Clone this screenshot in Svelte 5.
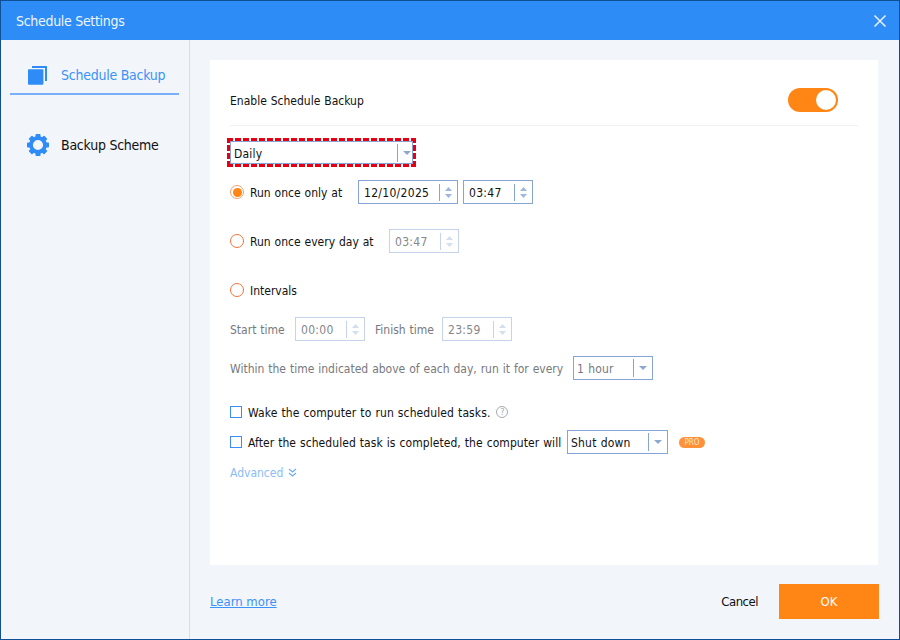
<script lang="ts">
	let enabled = $state(true);
	let mode = $state('once');
	let wake = $state(false);
	let after = $state(false);

	const gearTeeth = [0, 45, 90, 135, 180, 225, 270, 315];
</script>

{#snippet spin(value: string, width: number, disabled = false)}
	<div class="spin" class:disabled style="width: {width}px">
		<span class="spin-value">{value}</span>
		<span class="spin-arrows">
			<svg width="7" height="4" viewBox="0 0 7 4"><path d="M3.5 0 7 4H0Z" /></svg>
			<svg width="7" height="4" viewBox="0 0 7 4"><path d="M0 0H7L3.5 4Z" /></svg>
		</span>
	</div>
{/snippet}

{#snippet combo(value: string, width: number, cls = '')}
	<div class="combo {cls}" style="width: {width}px">
		<span class="combo-value">{value}</span>
		<span class="combo-arrow">
			<svg width="8" height="4" viewBox="0 0 8 4"><path d="M0 0H8L4 4Z" /></svg>
		</span>
	</div>
{/snippet}

{#snippet radio(id: string)}
	<button class="radio" class:on={mode === id} aria-label={id} onclick={() => (mode = id)}></button>
{/snippet}

<div class="window">
	<header class="titlebar">
		<span>Schedule Settings</span>
		<svg class="close" width="14" height="14" viewBox="0 0 14 14">
			<path d="M1.500 1.500 12.500 12.500M12.500 1.500 1.500 12.500" />
		</svg>
	</header>

	<div class="body">
		<nav class="sidebar">
			<div class="tab active">
				<svg class="tab-icon" width="24" height="24" viewBox="0 0 24 24">
					<path d="M5 3H20V18H18V5H5Z" fill="#2f8cf7" />
					<rect x="1" y="6.300" width="15.400" height="15.400" rx="1" fill="#2f8cf7" />
				</svg>
				<span>Schedule Backup</span>
			</div>
			<div class="tab">
				<svg class="tab-icon" width="24" height="24" viewBox="0 0 24 24">
					<circle cx="11" cy="12" r="7" fill="none" stroke="#2f8cf7" stroke-width="3.800" />
					{#each gearTeeth as angle}
						<rect x="8.500" y="1" width="5" height="4.500" rx="0.800" fill="#2f8cf7" transform="rotate({angle} 11 12)" />
					{/each}
				</svg>
				<span>Backup Scheme</span>
			</div>
		</nav>

		<main class="content">
			<section class="card">
				<div class="card-head">
					<span class="text">Enable Schedule Backup</span>
					<button class="toggle" class:on={enabled} aria-label="Enable" onclick={() => (enabled = !enabled)}></button>
				</div>

				<div class="highlight">
					{@render combo('Daily', 183, 'tall')}
				</div>

				<div class="row first">
					{@render radio('once')}
					<span class="text label once-label">Run once only at</span>
					{@render spin('12/10/2025', 100)}
					{@render spin('03:47', 70)}
				</div>

				<div class="row gap-lg">
					{@render radio('daily')}
					<span class="text label daily-label">Run once every day at</span>
					{@render spin('03:47', 70, true)}
				</div>

				<div class="row gap-lg">
					{@render radio('interval')}
					<span class="text label">Intervals</span>
				</div>

				<div class="row gap-sm muted">
					<span class="text start-label">Start time</span>
					{@render spin('00:00', 70, true)}
					<span class="text finish-label">Finish time</span>
					{@render spin('23:59', 70, true)}
				</div>

				<div class="row gap-sm muted">
					<span class="text within-label">Within the time indicated above of each day, run it for every</span>
					{@render combo('1 hour', 80, 'dim')}
				</div>

				<div class="row wake-row">
					<button class="check" class:on={wake} aria-label="Wake" onclick={() => (wake = !wake)}></button>
					<span class="text check-label">Wake the computer to run scheduled tasks.</span>
					<span class="help">?</span>
				</div>

				<div class="row">
					<button class="check" class:on={after} aria-label="After" onclick={() => (after = !after)}></button>
					<span class="text check-label after-label">After the scheduled task is completed, the computer will</span>
					{@render combo('Shut down', 101)}
					<span class="pro">PRO</span>
				</div>

				<div class="row advanced">
					<span class="text">Advanced</span>
					<svg width="9" height="9" viewBox="0 0 9 9">
						<path d="M1 1 4.500 4 8 1M1 5 4.500 8 8 5" />
					</svg>
				</div>
			</section>

			<footer class="footer">
				<a href="#learn" class="learn">Learn more</a>
				<span class="cancel">Cancel</span>
				<button class="ok">OK</button>
			</footer>
		</main>
	</div>
</div>

<style>
	:global(body) {
		margin: 0;
	}

	.window {
		width: 900px;
		height: 640px;
		box-sizing: border-box;
		display: flex;
		flex-direction: column;
		border: 1px solid #114f94;
		border-top: 0;
		background: #f2f5fa;
		font-family: "DejaVu Sans Condensed", "DejaVu Sans", sans-serif;
		font-size: 12px;
		color: #111;
		overflow: hidden;
	}

	.titlebar {
		height: 40px;
		flex: none;
		display: flex;
		align-items: center;
		justify-content: space-between;
		padding: 0 12px 0 15px;
		background: #2e8cf7;
		border-top: 1px solid #114f94;
		box-sizing: border-box;
		color: #eef5ff;
		font-size: 14px;
		letter-spacing: -0.3px;
	}

	.close path {
		stroke: #e4effd;
		stroke-width: 1.6;
		fill: none;
	}

	.body {
		flex: 1;
		display: flex;
		min-height: 0;
	}

	.sidebar {
		width: 169px;
		flex: none;
		border-right: 1px solid #d8dee6;
		padding: 12px 10px 0 9px;
	}

	.tab {
		height: 46px;
		display: flex;
		align-items: center;
		gap: 10px;
		padding: 5px 0 0 17px;
		font-size: 14px;
		letter-spacing: -0.25px;
		color: #111;
		margin-bottom: 24px;
		box-sizing: border-box;
	}

	.tab.active {
		color: #3b92f8;
		border-bottom: 2px solid #7ab0fb;
		height: 43px;
	}

	.tab-icon {
		flex: none;
	}

	.content {
		flex: 1;
		display: flex;
		flex-direction: column;
		padding: 20px 21px 0 20px;
		min-width: 0;
	}

	.card {
		height: 505px;
		flex: none;
		background: #fff;
		padding: 0 20px;
		box-sizing: border-box;
		word-spacing: 0.5px;
	}

	.card-head {
		height: 66px;
		display: flex;
		align-items: center;
		justify-content: space-between;
		padding: 15px 20px 0 0;
		border-bottom: 1px solid #f0f1f3;
		box-sizing: border-box;
	}

	.text {
		padding-top: 2px;
	}

	.toggle {
		width: 50px;
		height: 24px;
		padding: 0;
		border: 0;
		border-radius: 12px;
		background: #c9cfd8;
		position: relative;
		cursor: pointer;
	}

	.toggle.on {
		background: #ff8514;
	}

	.toggle::after {
		content: '';
		position: absolute;
		top: 2px;
		left: 2px;
		width: 20px;
		height: 20px;
		border-radius: 50%;
		background: #fff;
	}

	.toggle.on::after {
		left: 28px;
	}

	.highlight {
		width: 183px;
		margin: 12px 0 0 -3px;
		padding: 3px;
		background:
			repeating-linear-gradient(90deg, #e60012 0 6px, transparent 6px 8px) top / 100% 3px no-repeat,
			repeating-linear-gradient(90deg, #e60012 0 6px, transparent 6px 8px) bottom / 100% 3px no-repeat,
			repeating-linear-gradient(0deg, #e60012 0 6px, transparent 6px 8px) left / 3px 100% no-repeat,
			repeating-linear-gradient(0deg, #e60012 0 6px, transparent 6px 8px) right / 3px 100% no-repeat;
	}

	.row {
		height: 30px;
		display: flex;
		align-items: center;
	}

	.row.first {
		margin-top: 10px;
	}

	.gap-lg {
		margin-top: 19px;
	}

	.gap-sm {
		margin-top: 9px;
	}

	.wake-row {
		margin-top: 14px;
	}

	.muted {
		color: #77797d;
	}

	.radio {
		width: 12px;
		height: 12px;
		flex: none;
		padding: 0;
		border: 1px solid #f0733a;
		border-radius: 50%;
		background: #fff;
		position: relative;
		cursor: pointer;
		box-sizing: content-box;
	}

	.radio.on {
		border-color: #f0a070;
	}

	.radio.on::after {
		content: '';
		position: absolute;
		inset: 1.5px;
		border-radius: 50%;
		background: #ff8514;
	}

	.label {
		margin-left: 6px;
	}

	.once-label {
		width: 108px;
	}

	.daily-label {
		width: 139px;
	}

	.spin {
		height: 24px;
		box-sizing: border-box;
		display: flex;
		align-items: center;
		border: 1px solid #86a5d6;
		margin-right: 5px;
		background: #fff;
		color: #111;
		flex: none;
	}

	.spin.disabled {
		border-color: #c5d4ec;
		color: #85878b;
	}

	.spin-value {
		flex: 1;
		padding: 2px 0 0 5px;
		letter-spacing: 0.3px;
	}

	.spin-arrows {
		width: 17px;
		height: 17px;
		border-left: 1px solid #86a5d6;
		display: flex;
		flex-direction: column;
		align-items: center;
		justify-content: center;
		gap: 3px;
		flex: none;
	}

	.spin-arrows path {
		fill: #9fb7dd;
	}

	.disabled .spin-arrows {
		border-left-color: #c5d4ec;
	}

	.disabled .spin-arrows path {
		fill: #d3deef;
	}

	.start-label {
		width: 65px;
	}

	.finish-label {
		width: 67px;
		margin-left: 5px;
	}

	.within-label {
		width: 343px;
	}

	.combo {
		height: 24px;
		box-sizing: border-box;
		display: flex;
		align-items: center;
		border: 1px solid #86a5d6;
		background: #fff;
		color: #111;
		flex: none;
	}

	.combo.tall {
		height: 23px;
	}

	.combo.dim {
		color: #77797d;
	}

	.combo-value {
		flex: 1;
		padding: 2px 0 0 3px;
		letter-spacing: 0.2px;
	}

	.combo-arrow {
		width: 18px;
		height: 18px;
		border-left: 1px solid #86a5d6;
		display: flex;
		align-items: center;
		justify-content: center;
		flex: none;
	}

	.tall .combo-arrow {
		width: 15px;
		box-sizing: border-box;
		padding-left: 3px;
	}

	.combo-arrow path {
		fill: #8fa8d0;
	}

	.check {
		width: 12px;
		height: 12px;
		flex: none;
		padding: 0;
		border: 1px solid #3a8ef5;
		background: #fff;
		box-sizing: border-box;
		cursor: pointer;
	}

	.check.on {
		background: #3a8ef5;
	}

	.check-label {
		margin-left: 6px;
		letter-spacing: 0.1px;
	}

	.after-label {
		width: 319px;
		letter-spacing: 0.06px;
	}

	.help {
		width: 12px;
		height: 12px;
		box-sizing: border-box;
		margin-left: 6px;
		border: 1px solid #a5abb3;
		border-radius: 50%;
		color: #a5abb3;
		font-size: 9px;
		line-height: 10px;
		text-align: center;
	}

	.pro {
		margin-left: 11px;
		width: 26px;
		height: 11px;
		border-radius: 6px;
		background: #ff9138;
		color: #ffe6d0;
		font-size: 8px;
		line-height: 11px;
		text-align: center;
	}

	.advanced {
		color: #8cbcf8;
		gap: 5px;
	}

	.advanced path {
		stroke: #6ea8f5;
		stroke-width: 1.2;
		fill: none;
	}

	.footer {
		flex: 1;
		display: flex;
		align-items: center;
		padding-bottom: 2px;
	}

	.learn {
		color: #3b92f8;
		font-size: 13px;
		text-decoration: underline;
		margin-right: auto;
	}

	.cancel {
		margin-right: 21px;
		font-size: 13px;
		letter-spacing: -0.5px;
		color: #111;
	}

	.ok {
		width: 100px;
		height: 35px;
		border: 0;
		padding: 0;
		background: #ff8514;
		color: #fff;
		font: inherit;
		font-size: 13px;
		margin-right: -1px;
		cursor: pointer;
	}
</style>
